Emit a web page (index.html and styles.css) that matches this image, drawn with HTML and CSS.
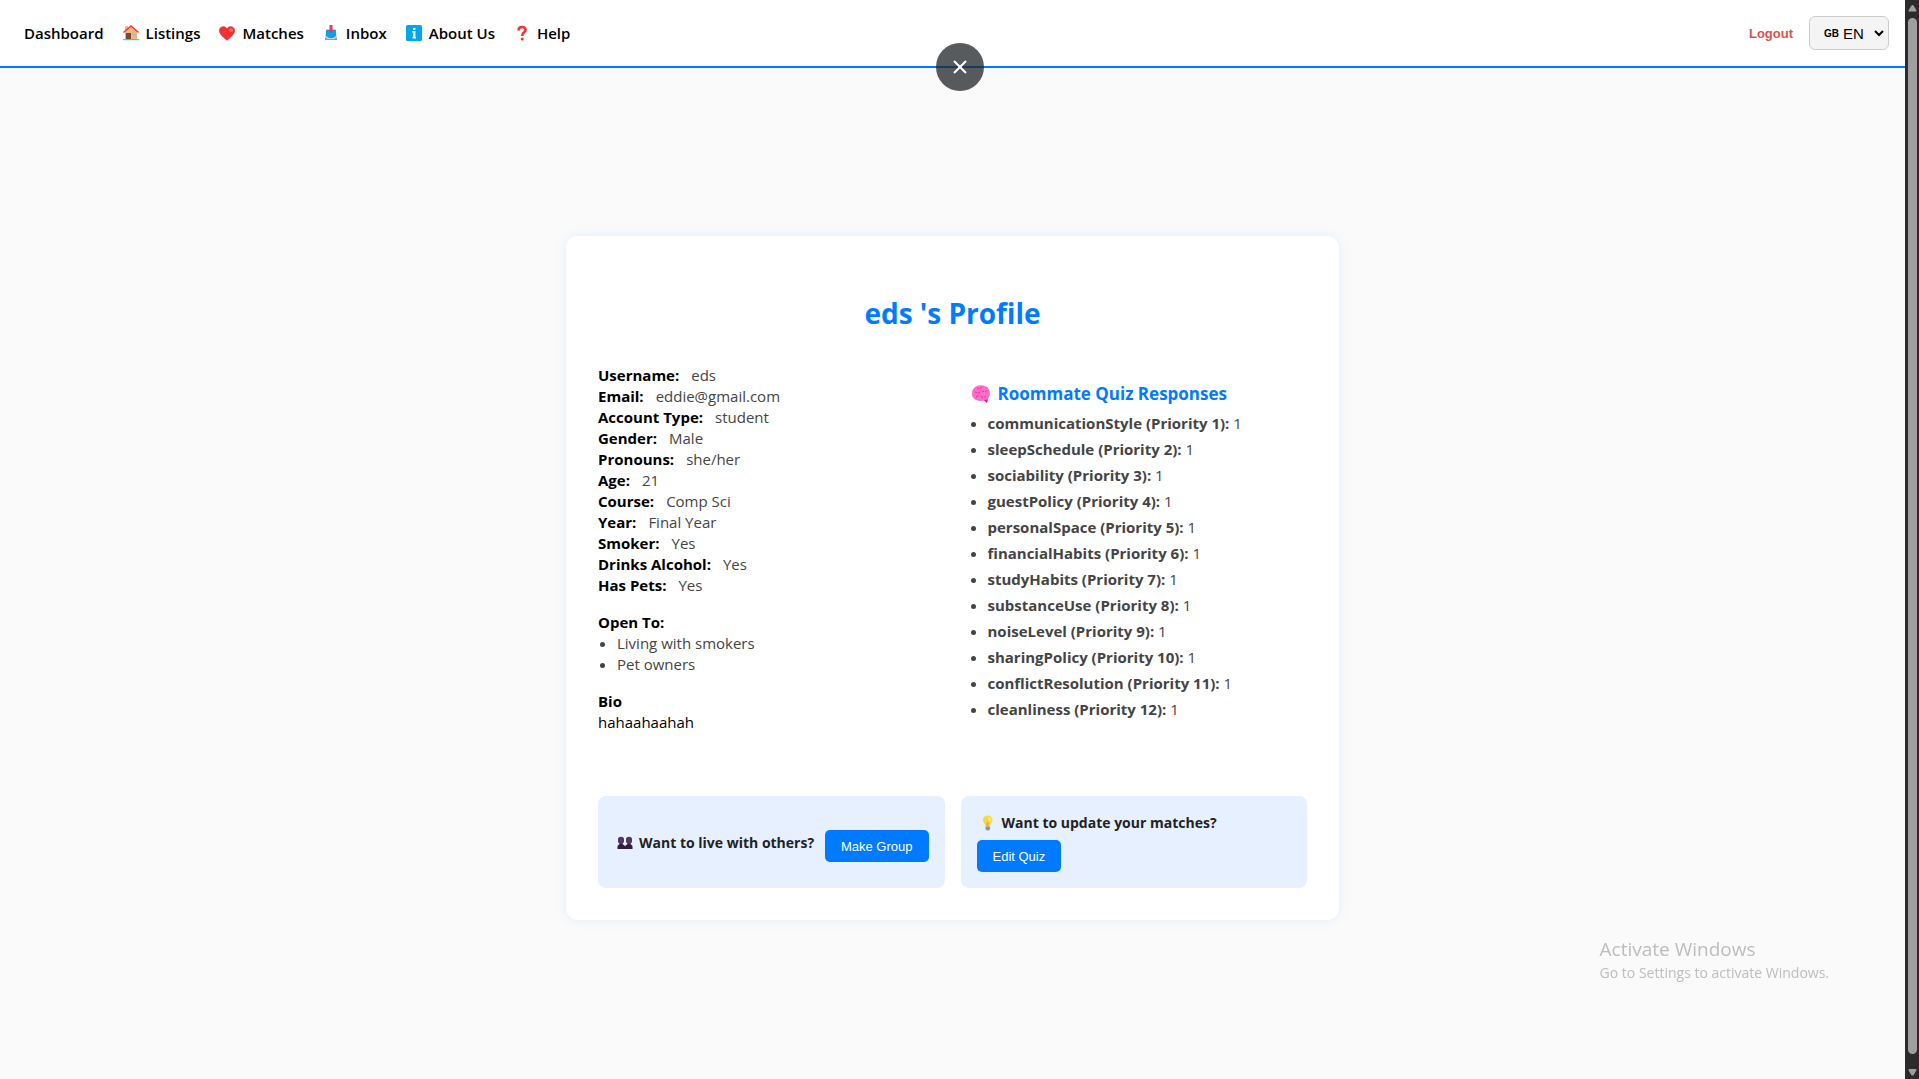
FILE: index.html
```html
<!DOCTYPE html>
<html lang="en">
<head>
<meta charset="utf-8">
<title>Profile</title>
<link rel="stylesheet" href="styles.css">
</head>
<body>
<div class="page">
  <header class="topbar">
    <nav class="nav" aria-label="Main">
      <a href="#">Dashboard</a>
      <a href="#"><svg class="icon" viewBox="0 0 16 16" aria-hidden="true"><path fill="#f0b878" d="M2 1h3v4h-3zM2 7l6-5 6 5v7H2z"/><path fill="none" stroke="#f8312f" stroke-width="1.4" d="M.5 7.500 8 1l7.500 6.500"/><path fill="#7d4533" d="M3 8h5v6H3z"/><path fill="#83cbff" d="M9.500 8H13v3H9.500z"/><path fill="#00f397" d="M0 14h16v1.200H0z"/></svg>Listings</a>
      <a href="#"><svg class="icon" viewBox="0 0 16 16" aria-hidden="true"><path fill="#f8312f" stroke="#d2133f" stroke-width=".6" d="M8 15.200C5 13 .4 9 .4 5.500.4 1.500 5.500.2 8 3.600 10.500.2 15.600 1.500 15.600 5.500 15.600 9 11 13 8 15.200z"/><path fill="#ff6b5b" d="M10 4.500c1-2 4-1.500 4 1 0 1.500-1.500 1.500-2.500 1.500S9.500 6 10 4.500z"/></svg>Matches</a>
      <a href="#"><svg class="icon" viewBox="0 0 16 16" aria-hidden="true"><path fill="#d3d3d3" d="M3 4h10l1 9H2z"/><path fill="#999" d="M2 13h12v2H2z"/><path fill="#d3d3d3" d="M4 12h8v2H4z"/><path fill="#00a6ed" d="M3 5h10v6l-3 2H6l-3-2z"/><path fill="#f92f60" d="M6.500 0h3v5H11L8 8 5 5h1.500z"/></svg>Inbox</a>
      <a href="#"><svg class="icon" viewBox="0 0 16 16" aria-hidden="true"><rect width="16" height="16" rx="1.500" fill="#00a6ed"/><path fill="#fff" d="M7 3h2.400v2H7zM6 6h3.400v6H10v1.400H6.400V12H7.200V7.400H6z"/></svg>About Us</a>
      <a href="#"><svg class="icon" viewBox="0 0 16 16" aria-hidden="true"><path fill="none" stroke="#f8312f" stroke-width="2.600" d="M4.500 5.500C4.500 .8 12 1 11.500 5c-.3 2.500-3.300 2.200-3.300 6"/><circle cx="8.200" cy="14" r="1.500" fill="#f8312f"/></svg>Help</a>
    </nav>
    <div class="account">
      <button class="logout" type="button">Logout</button>
      <label class="lang"><span class="lang-flag">GB</span><select aria-label="Language"><option>EN</option></select></label>
    </div>
  </header>

  <main class="card">
    <h1>eds 's Profile</h1>
    <div class="columns">
      <section class="details">
        <dl class="facts">
          <div><dt>Username:</dt><dd>eds</dd></div>
          <div><dt>Email:</dt><dd>eddie@gmail.com</dd></div>
          <div><dt>Account Type:</dt><dd>student</dd></div>
          <div><dt>Gender:</dt><dd>Male</dd></div>
          <div><dt>Pronouns:</dt><dd>she/her</dd></div>
          <div><dt>Age:</dt><dd>21</dd></div>
          <div><dt>Course:</dt><dd>Comp Sci</dd></div>
          <div><dt>Year:</dt><dd>Final Year</dd></div>
          <div><dt>Smoker:</dt><dd>Yes</dd></div>
          <div><dt>Drinks Alcohol:</dt><dd>Yes</dd></div>
          <div><dt>Has Pets:</dt><dd>Yes</dd></div>
        </dl>
        <div class="group">
          <h2>Open To:</h2>
          <ul class="bullets">
            <li>Living with smokers</li>
            <li>Pet owners</li>
          </ul>
        </div>
        <div class="group">
          <h2>Bio</h2>
          <p>hahaahaahah</p>
        </div>
      </section>
      <section class="quiz">
        <h2><svg class="brain" viewBox="0 0 18 18" aria-hidden="true"><path fill="#ff6dc6" d="M0 10C-.5 6 1 3 4 1.500 8-.5 13 0 16 3c2.500 3 2.500 7 .5 10-.5 2-1 3-1.500 5l-3-2.500C7 17 1 15 0 10z"/><path fill="none" stroke="#e0118c" stroke-width=".7" stroke-dasharray="2 1.500" d="M5 3l2 1 3-2M3 7l3 1 2-1M10 6l3 1 2-2M4 12l3-1M9 12h4l2-2"/><path fill="#e0118c" d="M12 15l3.500-.5L15 18z"/></svg>Roommate Quiz Responses</h2>
        <ul class="bullets">
          <li><strong>communicationStyle (Priority 1):</strong> 1</li>
          <li><strong>sleepSchedule (Priority 2):</strong> 1</li>
          <li><strong>sociability (Priority 3):</strong> 1</li>
          <li><strong>guestPolicy (Priority 4):</strong> 1</li>
          <li><strong>personalSpace (Priority 5):</strong> 1</li>
          <li><strong>financialHabits (Priority 6):</strong> 1</li>
          <li><strong>studyHabits (Priority 7):</strong> 1</li>
          <li><strong>substanceUse (Priority 8):</strong> 1</li>
          <li><strong>noiseLevel (Priority 9):</strong> 1</li>
          <li><strong>sharingPolicy (Priority 10):</strong> 1</li>
          <li><strong>conflictResolution (Priority 11):</strong> 1</li>
          <li><strong>cleanliness (Priority 12):</strong> 1</li>
        </ul>
      </section>
    </div>
    <div class="actions">
      <div class="action action-row">
        <p><svg class="icon" viewBox="0 0 16 16" aria-hidden="true"><path fill="#533566" d="M1 5c0-3 6-3 6 0v3l-1.500 2h-3L1 8zM9 5c0-3 6-3 6 0v3l-1.500 2h-3L9 8z"/><path fill="#321b41" d="M.5 15v-3l2-2h3L8 12l2.500-2h3l2 2v3z"/></svg>Want to live with others?</p>
        <button class="primary" type="button">Make Group</button>
      </div>
      <div class="action action-stack">
        <p><svg class="icon" viewBox="0 0 16 16" aria-hidden="true"><path fill="#fcd53f" d="M3 5c0-6 9.500-6 9.500 0 0 3-2.200 3.500-2.500 6.500H5.500C5.200 8.500 3 8 3 5z"/><path fill="#fff176" d="M8 2c3 0 3.500 3 2.500 4.500S7.500 5.500 8 2z"/><path fill="#f9a62b" d="M6.500 7h2v4.500h-2z"/><path fill="#998ea4" d="M5.500 11.500H10V14l-1 1.500H7l-1.500-1z"/></svg>Want to update your matches?</p>
        <button class="primary" type="button">Edit Quiz</button>
      </div>
    </div>
  </main>

  <button class="close" type="button" aria-label="Close"><svg viewBox="0 0 14 14" aria-hidden="true"><path fill="none" stroke="#fff" stroke-width="2" d="M1 1l12 12M13 1 1 13"/></svg></button>
  <div class="watermark">
    <p class="watermark-title">Activate Windows</p>
    <p>Go to Settings to activate Windows.</p>
  </div>
</div>
<div class="scrollbar" aria-hidden="true">
  <svg viewBox="0 0 10 8"><path fill="#9f9f9f" d="M5 0q1 0 1.500 1L9.500 6q.5 1.500-1 1.500h-7Q0 7.500.5 6l3-5Q4 0 5 0z"/></svg>
  <span class="thumb"></span>
  <svg viewBox="0 0 10 8"><path fill="#9f9f9f" d="M5 7.500q-1 0-1.500-1L.5 1.500Q0 0 1.500 0h7Q10 0 9.500 1.500l-3 5Q6 7.500 5 7.500z"/></svg>
</div>
</body>
</html>
```
FILE: styles.css
```css
* {
  box-sizing: border-box;
}

body {
  margin: 0;
  display: flex;
  background: #fafafa;
  color: #000;
  font: 15px/21px "Open Sans", "Noto Sans", sans-serif;
}

h1, h2, p, ul, dl, dd {
  margin: 0;
  padding: 0;
}

button {
  border: 0;
  cursor: pointer;
}

.page {
  flex: 1;
  min-height: 100vh;
}

.topbar {
  display: flex;
  justify-content: space-between;
  align-items: center;
  padding: 16px 16px 16px 24px;
  border-bottom: 2px solid #007bff;
  background: #fff;
}

.nav {
  display: flex;
  gap: 19px;
}

.nav a {
  display: flex;
  align-items: center;
  gap: 7px;
  color: #000;
  font-weight: 600;
  text-decoration: none;
}

.icon {
  width: 16px;
  height: 16px;
  flex: none;
}

.account {
  display: flex;
  align-items: center;
  gap: 16px;
}

.logout {
  padding: 0;
  background: none;
  color: #d9534f;
  font: bold 13px "Liberation Sans", Arial, sans-serif;
}

.lang {
  display: flex;
  align-items: center;
  height: 34px;
  padding: 0 1px 0 14px;
  border: 1px solid #ccc;
  border-radius: 6px;
  background: #f4f4f4;
}

.lang-flag {
  font: bold 10px "Liberation Sans", Arial, sans-serif;
}

.lang select {
  width: 48px;
  border: 0;
  background: transparent;
  color: #000;
  font: 15px "Liberation Sans", Arial, sans-serif;
}

.card {
  max-width: 773px;
  margin: 168px auto 159px;
  padding: 56px 32px 32px;
  border-radius: 12px;
  background: #fff;
  box-shadow: 0 0 12px rgba(0, 123, 255, 0.1);
}

h1 {
  margin-bottom: 31px;
  color: #007bff;
  font-size: 28px;
  line-height: 42px;
  text-align: center;
}

.columns,
.actions {
  display: grid;
  grid-template-columns: 1fr 1fr;
  gap: 16px;
}

.facts div {
  display: flex;
  gap: 12px;
}

.facts dt,
.details h2 {
  font-size: 15px;
  font-weight: 700;
}

.facts dd,
.bullets {
  color: #444;
}

.bullets {
  padding-left: 19px;
}

.group {
  margin-top: 16px;
}

.quiz {
  padding: 17px 8px 0;
}

.quiz h2 {
  display: flex;
  align-items: center;
  gap: 7px;
  margin-bottom: 4px;
  padding-left: 2px;
  color: #007bff;
  font-size: 17px;
  line-height: 24px;
}

.quiz li {
  line-height: 26px;
}

.brain {
  width: 20px;
  height: 18px;
}

.actions {
  margin-top: 63px;
}

.action {
  display: flex;
  min-height: 92px;
  padding: 16px;
  border-radius: 8px;
  background: #e6f0ff;
}

.action-row {
  align-items: center;
  justify-content: space-between;
}

.action-stack {
  flex-direction: column;
  align-items: flex-start;
  justify-content: space-between;
}

.action p {
  display: flex;
  align-items: center;
  gap: 6px;
  padding-left: 3px;
  color: #222;
  font-size: 14px;
  font-weight: 700;
}

.action-row .primary {
  margin-top: 8px;
}

.primary {
  height: 32px;
  padding: 0 16px;
  border-radius: 5px;
  background: #007bff;
  color: #fff;
  font: 13px "Liberation Sans", Arial, sans-serif;
}

.close {
  position: fixed;
  top: 43px;
  left: 50%;
  display: grid;
  place-items: center;
  width: 48px;
  height: 48px;
  padding: 0;
  border-radius: 50%;
  background: rgba(32, 36, 40, 0.75);
  transform: translateX(-50%);
}

.close svg {
  width: 14px;
  height: 14px;
}

.watermark {
  position: fixed;
  right: 90px;
  bottom: 96px;
  color: #bdbdbd;
  font-size: 14px;
}

.watermark-title {
  font-size: 19px;
  line-height: 26px;
}

.scrollbar {
  position: sticky;
  top: 0;
  display: flex;
  flex-direction: column;
  align-items: center;
  gap: 6px;
  width: 14px;
  height: 100vh;
  padding: 5px 0 3px;
  background: #2b2b2b;
}

.scrollbar svg {
  width: 9px;
  height: 7px;
}

.thumb {
  flex: 1;
  width: 9px;
  margin-bottom: 9px;
  border-radius: 5px;
  background: #9f9f9f;
}
```
